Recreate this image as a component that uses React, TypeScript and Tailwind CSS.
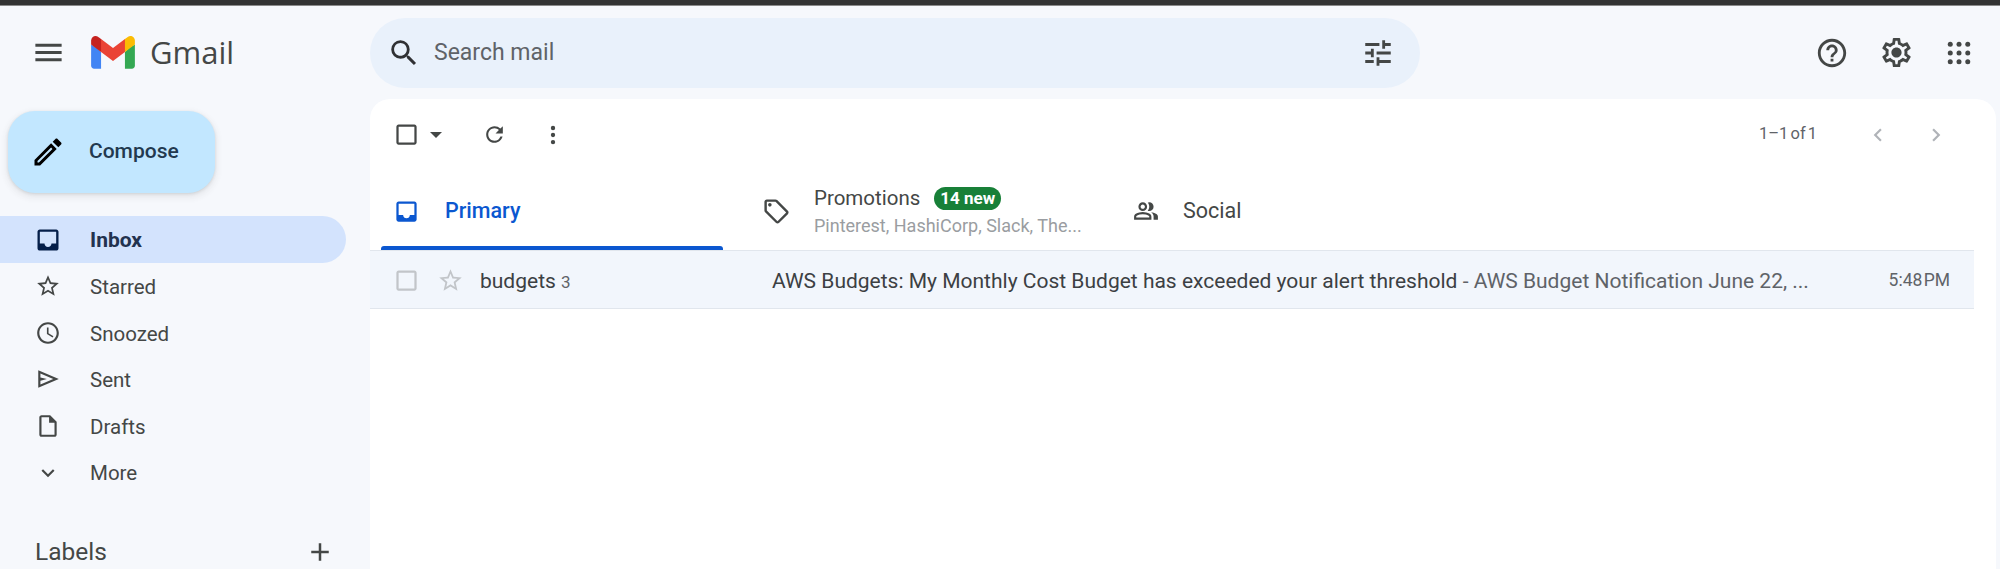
import React from "react";

const P = {
  menu: "M3 18h18v-2H3v2zm0-5h18v-2H3v2zm0-7v2h18V6H3z",
  search: "M15.5 14h-.79l-.28-.27A6.471 6.471 0 0 0 16 9.5 6.5 6.5 0 1 0 9.5 16c1.61 0 3.09-.59 4.23-1.57l.27.28v.79l5 4.99L20.49 19l-4.99-5zm-6 0C7.01 14 5 11.99 5 9.5S7.01 5 9.5 5 14 7.01 14 9.5 11.99 14 9.5 14z",
  tune: "M3 17v2h6v-2H3zM3 5v2h10V5H3zm10 16v-2h8v-2h-8v-2h-2v6h2zM7 9v2H3v2h4v2h2V9H7zm14 4v-2H11v2h10zm-6-4h2V7h4V5h-4V3h-2v6z",
  help: "M11 18h2v-2h-2v2zm1-16C6.48 2 2 6.48 2 12s4.48 10 10 10 10-4.48 10-10S17.52 2 12 2zm0 18c-4.41 0-8-3.59-8-8s3.59-8 8-8 8 3.59 8 8-3.59 8-8 8zm0-14c-2.21 0-4 1.79-4 4h2c0-1.1.9-2 2-2s2 .9 2 2c0 2-3 1.75-3 5h2c0-2.25 3-2.5 3-5 0-2.21-1.79-4-4-4z",
  gear: "M19.43 12.98c.04-.32.07-.64.07-.98 0-.34-.03-.66-.07-.98l2.11-1.65c.19-.15.24-.42.12-.64l-2-3.46c-.09-.16-.26-.25-.44-.25-.06 0-.12.01-.17.03l-2.49 1c-.52-.4-1.08-.73-1.69-.98l-.38-2.65C14.46 2.18 14.25 2 14 2h-4c-.25 0-.46.18-.49.42l-.38 2.65c-.61.25-1.17.59-1.69.98l-2.49-1c-.06-.02-.12-.03-.18-.03-.17 0-.34.09-.43.25l-2 3.46c-.13.22-.07.49.12.64l2.11 1.65c-.04.32-.07.65-.07.98 0 .33.03.66.07.98l-2.11 1.65c-.19.15-.24.42-.12.64l2 3.46c.09.16.26.25.44.25.06 0 .12-.01.17-.03l2.49-1c.52.4 1.08.73 1.69.98l.38 2.65c.03.24.24.42.49.42h4c.25 0 .46-.18.49-.42l.38-2.65c.61-.25 1.17-.59 1.69-.98l2.49 1c.06.02.12.03.18.03.17 0 .34-.09.43-.25l2-3.46c.12-.22.07-.49-.12-.64l-2.11-1.65zm-1.98-1.71c.04.31.05.52.05.73 0 .21-.02.43-.05.73l-.14 1.13.89.7 1.08.84-.7 1.21-1.27-.51-1.04-.42-.9.68c-.43.32-.84.56-1.25.73l-1.06.43-.16 1.13-.2 1.35h-1.4l-.19-1.35-.16-1.13-1.06-.43c-.43-.18-.83-.41-1.23-.71l-.91-.7-1.06.43-1.27.51-.7-1.21 1.08-.84.89-.7-.14-1.13c-.03-.31-.05-.54-.05-.74s.02-.43.05-.73l.14-1.13-.89-.7-1.08-.84.7-1.21 1.27.51 1.04.42.9-.68c.43-.32.84-.56 1.25-.73l1.06-.43.16-1.13.2-1.35h1.39l.19 1.35.16 1.13 1.06.43c.43.18.83.41 1.23.71l.91.7 1.06-.43 1.27-.51.7 1.21-1.07.85-.89.7.14 1.13zM12 8.5c-1.93 0-3.5 1.57-3.5 3.5s1.57 3.5 3.5 3.5 3.5-1.57 3.5-3.5-1.57-3.5-3.5-3.5z",
  inbox: "M19 3H5c-1.1 0-2 .9-2 2v14c0 1.1.9 2 2 2h14c1.1 0 2-.9 2-2V5c0-1.1-.9-2-2-2zm0 12h-4c0 1.66-1.35 3-3 3s-3-1.34-3-3H5V5h14v10z",
  star: "M22 9.24l-7.19-.62L12 2 9.19 8.63 2 9.24l5.46 4.73L5.82 21 12 17.27 18.18 21l-1.63-7.03L22 9.24zM12 15.4l-3.76 2.27 1-4.28-3.32-2.88 4.38-.38L12 6.1l1.71 4.04 4.38.38-3.32 2.88 1 4.28L12 15.4z",
  clock: "M11.99 2C6.47 2 2 6.48 2 12s4.47 10 9.99 10C17.52 22 22 17.52 22 12S17.52 2 11.99 2zM12 20c-4.42 0-8-3.58-8-8s3.58-8 8-8 8 3.58 8 8-3.58 8-8 8zm.5-13H11v6l5.25 3.15.75-1.23-4.5-2.67z",
  send: "M3 20V4l19 8-19 8zm2-3l11.85-5L5 7v3.5l6 1.5-6 1.5V17z",
  draft: "M6 22c-1.1 0-2-.9-2-2V4c0-1.1.9-2 2-2h8l6 6v12c0 1.1-.9 2-2 2H6zm7-13V4H6v16h12V9h-5z",
  more: "M16.59 8.59L12 13.17 7.41 8.59 6 10l6 6 6-6z",
  add: "M19 13h-6v6h-2v-6H5v-2h6V5h2v6h6v2z",
  refresh: "M17.65 6.35A7.958 7.958 0 0 0 12 4c-4.42 0-7.99 3.58-7.99 8s3.57 8 7.99 8c3.73 0 6.84-2.55 7.73-6h-2.08A5.99 5.99 0 0 1 12 18c-3.31 0-6-2.69-6-6s2.69-6 6-6c1.66 0 3.14.69 4.22 1.78L13 11h7V4l-2.35 2.35z",
  box: "M19 5v14H5V5h14m0-2H5c-1.1 0-2 .9-2 2v14c0 1.1.9 2 2 2h14c1.1 0 2-.9 2-2V5c0-1.1-.9-2-2-2z",
  tag: "M21.41 11.41l-8.83-8.83c-.37-.37-.88-.58-1.41-.58H4c-1.1 0-2 .9-2 2v7.17c0 .53.21 1.04.59 1.41l8.83 8.83c.78.78 2.05.78 2.83 0l7.17-7.17c.78-.78.78-2.04-.01-2.83zM12.83 20L4 11.17V4h7.17L20 12.83 12.83 20zM6.5 5A1.5 1.5 0 1 0 6.5 8 1.5 1.5 0 1 0 6.5 5z",
  group: "M1 20v-2.8q0-.85.44-1.56.44-.71 1.16-1.09 1.55-.78 3.15-1.16Q7.35 13 9 13t3.25.39q1.6.38 3.15 1.16.72.38 1.16 1.09.44.71.44 1.56V20H1zm18 0v-3q0-1.1-.61-2.11-.61-1.01-1.74-1.74 1.28.15 2.4.51 1.13.36 2.1.89.9.5 1.38 1.11.47.61.47 1.34v3h-4zM9 12q-1.65 0-2.83-1.18Q5 9.65 5 8t1.17-2.83Q7.35 4 9 4t2.83 1.17Q13 6.35 13 8t-1.17 2.83Q10.65 12 9 12zm10-4q0 1.65-1.17 2.83Q16.65 12 15 12q-.27 0-.7-.06-.43-.06-.7-.14.68-.8 1.04-1.77Q15 9.05 15 8t-.36-2.03Q14.28 5 13.6 4.2q.35-.12.7-.16Q14.65 4 15 4q1.65 0 2.83 1.17Q19 6.35 19 8zM3 18h12v-.8q0-.27-.14-.5-.14-.23-.36-.35-1.35-.67-2.73-1.01Q10.4 15 9 15t-2.78.34q-1.38.34-2.72 1.01-.22.12-.36.35-.14.23-.14.5v.8zm6-8q.82 0 1.41-.59Q11 8.82 11 8t-.59-1.41Q9.83 6 9 6t-1.41.59Q7 7.18 7 8t.59 1.41Q8.18 10 9 10z",
  pencil: "M14.06 9.02l.92.92L5.92 19H5v-.92l9.06-9.06M17.66 3c-.25 0-.51.1-.7.29l-1.83 1.83 3.75 3.75 1.83-1.83c.39-.39.39-1.02 0-1.41l-2.34-2.34c-.2-.2-.45-.29-.71-.29zm-3.6 3.19L3 17.25V21h3.75L17.81 9.94l-3.75-3.75z",
  back: "M15.41 7.41L14 6l-6 6 6 6 1.41-1.41L10.83 12z",
  next: "M8.59 16.59L10 18l6-6-6-6-1.41 1.41L13.17 12z",
};

function Ic({ d, className }: { d: string; className: string }) {
  return (
    <svg viewBox="0 0 24 24" className={className} fill="currentColor" fillRule="evenodd">
      <path d={d} />
    </svg>
  );
}

function Logo() {
  return (
    <svg viewBox="0 0 256 193" className="w-[44px] h-[33px] shrink-0">
      <path fill="#4285F4" d="M58.182 192.05V93.14L27.507 65.077 0 49.504v125.091c0 9.658 7.825 17.455 17.455 17.455h40.727Z" />
      <path fill="#34A853" d="M197.818 192.05h40.727c9.659 0 17.455-7.826 17.455-17.455V49.505l-31.156 17.837-27.026 25.798v98.91Z" />
      <path fill="#EA4335" d="m58.182 93.14-4.174-38.647 4.174-36.989L128 69.868l69.818-52.364 4.669 34.992-4.669 40.644L128 145.504z" />
      <path fill="#FBBC04" d="M197.818 17.504V93.14L256 49.504V26.231c0-21.585-24.64-33.89-41.89-20.945l-16.292 12.218Z" />
      <path fill="#C5221F" d="m0 49.504 26.759 20.07L58.182 93.14V17.504L41.89 5.286C24.61-7.66 0 4.646 0 26.23v23.273Z" />
    </svg>
  );
}

function Dots3() {
  return (
    <svg viewBox="0 0 24 24" className="w-[26px] h-[26px] text-[#444746]" fill="currentColor">
      <circle cx="12" cy="5.5" r="2" />
      <circle cx="12" cy="12" r="2" />
      <circle cx="12" cy="18.5" r="2" />
    </svg>
  );
}

function Apps() {
  const c = [5, 12, 19];
  return (
    <svg viewBox="0 0 24 24" className="w-[30px] h-[30px] text-[#444746]" fill="currentColor">
      {c.map((y) => c.map((x) => <circle key={`${x}-${y}`} cx={x} cy={y} r="2" />))}
    </svg>
  );
}

const nav = [
  { label: "Starred", d: P.star },
  { label: "Snoozed", d: P.clock },
  { label: "Sent", d: P.send },
  { label: "Drafts", d: P.draft },
  { label: "More", d: P.more },
];

function Sidebar() {
  return (
    <aside className="w-[370px] shrink-0 flex flex-col">
      <div className="h-[92px] flex items-center pl-[31px]">
        <Ic d={P.menu} className="w-[35px] h-[35px] text-[#444746]" />
        <div className="ml-[25px]"><Logo /></div>
        <span className="ml-[15px] text-[31px] leading-none text-[#444746] font-['Open_Sans',sans-serif]">Gmail</span>
      </div>
      <button className="mt-[13px] ml-[8px] w-[207px] h-[82px] rounded-[27px] bg-[#c2e7ff] flex items-center pl-[22px] shadow-[0_1px_3px_rgba(60,64,67,0.15),0_3px_6px_2px_rgba(60,64,67,0.08)]">
        <Ic d={P.pencil} className="w-[36px] h-[36px] text-black" />
        <span className="ml-[23px] text-[21px] font-medium text-[#22394f]">Compose</span>
      </button>
      <nav className="mt-[23px] flex flex-col">
        <div className="w-[346px] h-[47px] rounded-r-full bg-[#d3e3fd] flex items-center pl-[35px]">
          <Ic d={P.inbox} className="w-[28px] h-[28px] text-[#041e49] -ml-px" />
          <span className="ml-[28px] mt-[2px] text-[21px] font-bold text-[#22324f]">Inbox</span>
        </div>
        {nav.map((n) => (
          <div key={n.label} className="h-[46.6px] flex items-center pl-[35px]">
            <Ic d={n.d} className="w-[26px] h-[26px] text-[#444746]" />
            <span className="ml-[29px] mt-[2px] text-[20.5px] text-[#444746]">{n.label}</span>
          </div>
        ))}
      </nav>
      <div className="mt-[41px] flex items-center justify-between pl-[35px] pr-[35px]">
        <span className="text-[24.5px] leading-[30px] text-[#444746]">Labels</span>
        <Ic d={P.add} className="w-[30px] h-[30px] text-[#444746]" />
      </div>
    </aside>
  );
}

function Tab({ active, width, children }: { active?: boolean; width: string; children: React.ReactNode }) {
  return (
    <div className={`${width} flex flex-col`}>
      <div className="flex-1 flex items-center pt-[6px]">{children}</div>
      <div className={`h-[4px] rounded-t-[3px] ${active ? "bg-[#0b57d0]" : ""}`} />
    </div>
  );
}

function Main() {
  return (
    <main className="flex-1 flex flex-col min-w-0">
      <header className="h-[93px] shrink-0 flex items-start pt-[12px]">
        <div className="w-[1050px] h-[70px] rounded-full bg-[#e9f1fb] flex items-center pl-[17px] pr-[25px]">
          <Ic d={P.search} className="w-[34px] h-[34px] text-[#303134]" />
          <span className="ml-[13px] text-[23px] text-[#5f6368] flex-1">Search mail</span>
          <Ic d={P.tune} className="w-[34px] h-[34px] text-[#444746]" />
        </div>
        <div className="flex items-center mt-[17px] ml-[395px] gap-[30px]">
          <Ic d={P.help} className="w-[34px] h-[34px] text-[#444746]" />
          <Ic d={P.gear} className="w-[35px] h-[35px] text-[#444746]" />
          <Apps />
        </div>
      </header>
      <section className="flex-1 mr-[4px] bg-white rounded-t-[20px] flex flex-col">
        <div className="h-[71px] shrink-0 flex items-center pl-[23px] pr-[47px]">
          <Ic d={P.box} className="w-[27px] h-[27px] text-[#444746]" />
          <svg viewBox="0 0 12 6" className="w-[12px] h-[6px] ml-[10px] text-[#444746]" fill="currentColor"><path d="M0 0h12L6 6z" /></svg>
          <Ic d={P.refresh} className="w-[25px] h-[25px] ml-[40px] text-[#444746]" />
          <div className="ml-[33px]"><Dots3 /></div>
          <span className="ml-auto text-[16.5px] text-[#5f6368] [word-spacing:-2px]">1–1 of 1</span>
          <Ic d={P.back} className="w-[26px] h-[26px] ml-[48px] text-[#b0b3b8]" />
          <Ic d={P.next} className="w-[26px] h-[26px] ml-[32px] text-[#b0b3b8]" />
        </div>
        <div className="h-[80px] shrink-0 flex pl-[11px] pr-[22px]">
          <Tab active width="w-[342px]">
            <Ic d={P.inbox} className="w-[27px] h-[27px] ml-[12px] text-[#0b57d0]" />
            <span className="ml-[25px] text-[21.5px] font-medium text-[#0b57d0]">Primary</span>
          </Tab>
          <Tab width="w-[369px] pl-[41px]">
            <Ic d={P.tag} className="w-[29px] h-[29px] -ml-[2px] text-[#444746]" />
            <div className="ml-[23px] flex flex-col">
              <div className="flex items-center">
                <span className="text-[20.5px] leading-[24px] text-[#444746]">Promotions</span>
                <span className="ml-[14px] h-[23px] px-[6px] rounded-full bg-[#188038] text-white text-[17px] font-bold leading-[23px]">14 new</span>
              </div>
              <span className="mt-[6px] text-[18px] leading-[20px] text-[#9a9da1] whitespace-nowrap">Pinterest, HashiCorp, Slack, The...</span>
            </div>
          </Tab>
          <Tab width="flex-1 pl-[41px]">
            <Ic d={P.group} className="w-[26px] h-[26px] text-[#444746]" />
            <span className="ml-[24px] text-[21.5px] text-[#444746]">Social</span>
          </Tab>
        </div>
        <div className="h-[59px] mr-[22px] flex items-center bg-[#f2f6fc] border-t border-b border-[#e1e6ed] pl-[23px] pr-[24px] pt-[1px]">
          <Ic d={P.box} className="w-[27px] h-[27px] text-[#c2c5c9]" />
          <Ic d={P.star} className="w-[27px] h-[27px] ml-[17px] text-[#c2c5c9]" />
          <span className="ml-[16px] mt-[3px] w-[292px] text-[21px] text-[#3c4043] whitespace-nowrap">
            budgets <span className="text-[17px] text-[#5f6368]">3</span>
          </span>
          <span className="flex-1 mt-[3px] text-[21px] text-[#3c4043] whitespace-nowrap">
            AWS Budgets: My Monthly Cost Budget has exceeded your alert threshold
            <span className="text-[#5f6368]"> - AWS Budget Notification June 22, ...</span>
          </span>
          <span className="text-[17.5px] mt-[1px] text-[#5f6368] [word-spacing:-3px]">5:48 PM</span>
        </div>
      </section>
    </main>
  );
}

export default function App() {
  return (
    <div className="w-[2000px] h-[569px] overflow-hidden bg-[#f6f8fc] flex flex-col font-['Roboto',sans-serif]">
      <div className="h-[6px] shrink-0 bg-[#333333] border-b border-[#8a8a8a]" />
      <div className="flex-1 flex min-h-0">
        <Sidebar />
        <Main />
      </div>
    </div>
  );
}
